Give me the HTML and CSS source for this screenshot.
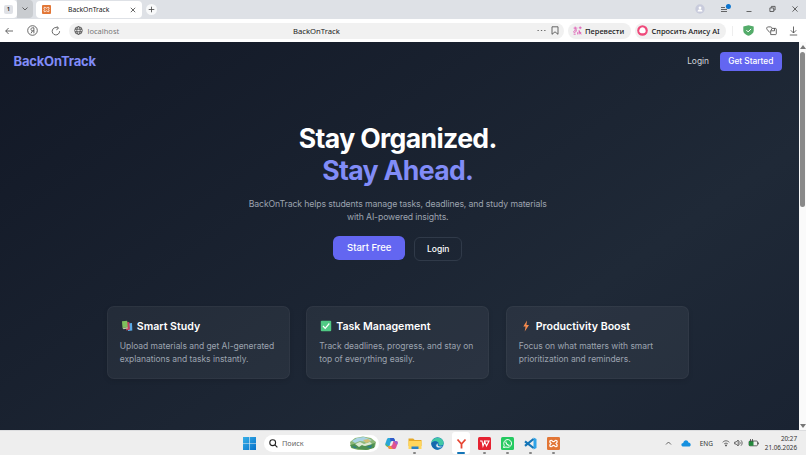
FILE: index.html
```html
<!DOCTYPE html>
<html lang="ru">
<head>
<meta charset="utf-8">
<title>BackOnTrack</title>
<link rel="stylesheet" href="styles.css">
</head>
<body>
<div class="tabbar">
  <div class="tab-count"><span>1</span></div>
  <div class="tab-list"><svg width="8" height="8" viewBox="0 0 8 8"><path d="M1.5 2.5 4 5l2.5-2.5" class="ln"/></svg></div>
  <div class="tab">
    <svg width="9" height="9" viewBox="0 0 20 20"><use href="#xampp"/></svg>
    <span>BackOnTrack</span>
    <svg class="tab-x" width="6" height="6" viewBox="0 0 6 6"><path d="M.8.8l4.4 4.4M5.2.8.8 5.2" class="ln"/></svg>
  </div>
  <div class="tab-new"><svg width="7" height="7" viewBox="0 0 7 7"><path d="M3.5.7v5.6M.7 3.5h5.6" class="ln"/></svg></div>
  <div class="window-tools">
    <svg width="10" height="10" viewBox="0 0 10 10"><circle cx="5" cy="5" r="4.7" fill="#c8cbdc"/><circle cx="5" cy="3.8" r="1.4" fill="#fff"/><path d="M2.6 7.6c0-3 4.8-3 4.8 0z" fill="#fff"/></svg>
    <svg width="12" height="10" viewBox="0 0 12 10"><path d="M1 3.5h4M1 5.5h6M1 7.5h6" class="ln"/><circle cx="8.4" cy="2.6" r="2.5" fill="#0c75d0"/></svg>
    <svg width="6" height="10" viewBox="0 0 6 10"><path d="M.5 7.5h5" class="ln"/></svg>
    <svg width="7" height="10" viewBox="0 0 7 10"><path d="M.9 3.9h3.8v3.6H.9zM2.4 3.7V2.4h3.7V6H5" class="ln"/></svg>
    <svg width="6" height="10" viewBox="0 0 6 10"><path d="M.5 2.4l5 5.2M5.5 2.4l-5 5.2" class="ln"/></svg>
  </div>
</div>
<div class="toolbar">
  <div class="nav-icons">
    <svg width="8" height="10" viewBox="0 0 8 10"><path d="M8 5H.7M3.6 2 .7 5l2.9 3" class="ln"/></svg>
    <svg width="11" height="11" viewBox="0 0 11 11"><circle cx="5.5" cy="5.5" r="4.8" class="ln"/><path d="M6.9 8.3V2.8H5.6c-2.2 0-2.2 3 0 3h1.3M5.5 5.8 4 8.3" class="ln"/></svg>
    <svg width="10" height="10" viewBox="0 0 10 10"><path d="M8.6 5.2A3.7 3.7 0 1 1 6.7 2M6 .3l1.5 2L5.4 3.8" class="ln"/></svg>
  </div>
  <div class="address">
    <svg width="9" height="9" viewBox="0 0 9 9"><circle cx="4.5" cy="4.5" r="3.8" class="ln"/><ellipse cx="4.5" cy="4.5" rx="1.7" ry="3.8" class="ln"/><path d="M1 3.2h7M1 5.8h7" class="ln"/></svg>
    <span class="host">localhost</span>
    <span class="page-name">BackOnTrack</span>
    <svg class="dots" width="9" height="9" viewBox="0 0 9 9"><path d="M.5 4.5h1.3M3.9 4.5h1.3M7.2 4.5h1.3" class="ln"/></svg>
    <svg width="8" height="9" viewBox="0 0 8 9"><path d="M1 .8h6v7.5L4 5.8 1 8.3z" class="ln"/></svg>
  </div>
  <div class="chip translate">
    <svg width="9" height="9" viewBox="0 0 9 9"><path d="M.6 2.1h3.8M2.2.6v4C.2 4.8.2 7 1.8 6.5 3.2 6 3.5 4.5 3.4 3.3M5.8 1.8h2.9M7.2.4v2.8M4.6 8.4V6.2M6.1 8.4V4.5l2 3.9M6 6.8h2.3M.6 8.2h2.1" fill="none" stroke="#dd50b0" stroke-width=".8"/></svg>
    <span>Перевести</span>
  </div>
  <div class="chip alice">
    <svg width="11" height="11" viewBox="0 0 11 11"><circle cx="5.5" cy="5.5" r="5.3" fill="#ef4a7b"/><path d="M5.5 2.2c2.200 0 3.700 3 3.100 4.500-.8 2-5.400 2-6.200 0C1.800 5.200 3.300 2.200 5.500 2.200z" fill="#fff"/></svg>
    <span>Спросить Алису AI</span>
  </div>
  <i class="divider"></i>
  <div class="ext-icons">
    <svg width="11" height="11" viewBox="0 0 11 11"><path d="M5.500.2 10.700 1.500v4C10.700 8.300 8 9.900 5.500 10.800 3 9.900.3 8.300.3 5.500v-4z" fill="#54ac6a"/><path d="M3.400 5.100l1.700 1.800 3-3" fill="none" stroke="#fff"/></svg>
    <svg width="11" height="10" viewBox="0 0 11 10"><path d="M3.800 6.600 1.100 3.400C.2 2.200.8.900 2.200.9h2.200c1 0 1.600.7 1.600 1.700L4.700 4.800v3.800h4.800c.5 0 .8-.3.800-.8V3.200c0-.5-.3-.8-.8-.8H6.200M8.500 2.400v2.400H4.900" class="ln"/></svg>
    <svg width="9" height="10" viewBox="0 0 9 10"><path d="M4.500.5v6.400M1.800 4.300l2.700 2.700 2.700-2.700M.8 9h7.400" class="ln"/></svg>
  </div>
</div>
<div class="viewport">
  <div class="site">
    <header>
      <div class="brand">BackOnTrack</div>
      <nav><a>Login</a><a class="get">Get Started</a></nav>
    </header>
    <main>
      <h1><span>Stay Organized.</span><span class="accent">Stay Ahead.</span></h1>
      <p class="lead"><span>BackOnTrack helps students manage tasks, deadlines, and study materials</span><span>with AI-powered insights.</span></p>
      <div class="actions"><a class="start">Start Free</a><a class="login">Login</a></div>
      <section class="cards">
        <article>
          <h2><svg width="12" height="12" viewBox="0 0 12 12"><path d="M6 3.500l5-.5.300 7.500-4.300.5z" fill="#5aa9e6"/><path d="M4 2.300l4.300-.3.700 7.500-3.700 1z" fill="#c33f5e"/><path d="M1 1.300 6.200.8l.5 6.500L1.500 8z" fill="#7fbf5c"/><path d="M1.500 8l5.200-.7.200 1.200-4.400.7z" fill="#b9c7a6"/></svg><span>Smart Study</span></h2>
          <p>Upload materials and get AI-generated<br>explanations and tasks instantly.</p>
        </article>
        <article>
          <h2><svg width="12" height="12" viewBox="0 0 12 12"><rect x=".8" y=".8" width="10.400" height="10.400" rx="1" fill="#50c984"/><path d="M3 6l2.200 2.400L9.300 3.500" fill="none" stroke="#fff" stroke-width="1.200"/></svg><span>Task Management</span></h2>
          <p>Track deadlines, progress, and stay on<br>top of everything easily.</p>
        </article>
        <article>
          <h2><svg width="12" height="12" viewBox="0 0 12 12"><path d="M7 .5 3.300 6.600h2.300l-.9 4.900 4.300-6.500H6.500z" fill="#f78b4d"/></svg><span>Productivity Boost</span></h2>
          <p>Focus on what matters with smart<br>prioritization and reminders.</p>
        </article>
      </section>
    </main>
  </div>
  <div class="scrollbar"><i class="up"></i><i class="thumb"></i><i class="down"></i></div>
</div>
<div class="taskbar">
  <svg class="win" width="13" height="13" viewBox="0 0 13 13"><path d="M0 0h6.200v6.200H0zM6.800 0H13v6.200H6.800zM0 6.800h6.200V13H0zM6.800 6.800H13V13H6.800z" fill="url(#wing)"/></svg>
  <div class="search">
    <svg width="9" height="9" viewBox="0 0 9 9"><circle cx="3.700" cy="3.700" r="2.900" fill="none" stroke="#222" stroke-width="1.100"/><path d="M5.900 5.900l2.500 2.500" stroke="#222" stroke-width="1.200"/></svg>
    <span>Поиск</span>
    <svg class="scene" width="28" height="14" viewBox="0 0 28 14"><path d="M1 6 6 2 14 .5 22 2l5 4-1 5-7 3H9L2 12z" fill="#8db878"/><path d="M3 5l5-3 7-1 8 3-4 2-8-1-5 2z" fill="#a9d3e6"/><path d="M1 9l8-2 6 3 11-3-1 5-8 2-7-1-7-1z" fill="#4f9151"/><path d="M6 8l5-2 4 2 6-2 2 2-7 2-3-1-3 2z" fill="#dce9d4"/><path d="M3 10l5 1-2 1.500zM17 11l6-2-1 3z" fill="#2c7d8e"/><path d="M14 4l5-1 3 2-5 2z" fill="#d1bf74"/></svg>
  </div>
  <div class="apps">
    <div class="app"><svg width="13" height="13" viewBox="0 0 13 13"><path d="M4 1h4c1 0 1.300.6 1.600 1.600L10 4H7.500C6 4 5.700 5 5.300 6.500L4.500 9H2C.5 9 0 7.800.4 6.600L1.800 2.500C2.200 1.400 3 1 4 1z" fill="#2aa6d8"/><path d="M9 12H5c-1 0-1.300-.6-1.600-1.600L3 9h2.500C7 9 7.300 8 7.700 6.500L8.500 4H11c1.500 0 2 1.200 1.600 2.400l-1.400 4.100C10.800 11.600 10 12 9 12z" fill="#df5390"/><path d="M5 1h3c1 0 1.300.6 1.600 1.600L10 4H7.500L5.500 4z" fill="#3159c9"/><path d="M.5 6.500 3 9l.4 1.500L1 9z" fill="#63b85b"/><path d="M3 9h2.500L8 12H5c-1 0-1.300-.6-1.600-1.600z" fill="#f29a38"/><path d="M8.500 4H11c1.500 0 2 1.200 1.600 2.400L12 8z" fill="#9b60d3"/></svg></div>
    <div class="app run"><svg width="14" height="13" viewBox="0 0 14 13"><path d="M.5 1.500h4.700l1.500 1.500h6.800v6H.5z" fill="#e5a826"/><path d="M.5 4h13v8H.5z" fill="#ffd65c"/><path d="M3.500 9.500h7V12h-7z" fill="#2781c6"/></svg></div>
    <div class="app"><svg width="13" height="13" viewBox="0 0 13 13"><circle cx="6.500" cy="6.500" r="6.200" fill="#1678bd"/><path d="M.4 6C1-.5 12-1.500 12.700 6c0 3-4.200 3-5 1.500C8.500 4 3 3 .4 6z" fill="#42c8a5"/><path d="M.4 6c3-3 7-1.500 7.300 1-1.500-1.800-4-.5-3.500 2 .4 2 2 3.300 4 3.500C4 13.500 0 10 .4 6z" fill="#1768ad"/><path d="M7.500 6.500c-2 1-.5 3.800 4.300 3-1.500 1-4.300 1.500-5.800.5-1.500-1.200-.5-3.500 1.500-3.500z" fill="#efefef"/></svg></div>
    <div class="app active"><svg width="11" height="13" viewBox="0 0 11 13"><path d="M1.500 2.500 5.500 7v4.500M9.500 2.500 5.500 7" fill="none" stroke="#e64532" stroke-width="1.800"/></svg></div>
    <div class="app run"><svg width="13" height="13" viewBox="0 0 13 13"><rect width="13" height="13" rx="1.500" fill="#e52332"/><path d="M2 4h2l1 5 1.700-4.500L8.500 9 11 4H6" fill="none" stroke="#fff" stroke-width="1.100"/></svg></div>
    <div class="app run"><svg width="13" height="13" viewBox="0 0 13 13"><rect width="13" height="13" rx="1.500" fill="#25ca61"/><path d="M2.500 10.500l.7-2.200A3.900 3.900 0 1 1 5 10z" fill="none" stroke="#fff"/><path d="M5 4.500c-.5 1.500 1.500 4 3.500 3.800" fill="none" stroke="#fff" stroke-width="1.200"/></svg></div>
    <div class="app run"><svg width="13" height="13" viewBox="0 0 13 13"><path d="M9.500.5 12.500 2v9l-3 1.500z" fill="#2fa4e8"/><path d="M1 4.300 9.500 11M1 8.800 9.500 2" stroke="#1475b7" stroke-width="2.200"/></svg></div>
    <div class="app run"><svg width="13" height="13" viewBox="0 0 20 20"><g id="xampp"><rect width="20" height="20" rx="2" fill="#e27636"/><path d="M6.500 5C3.500 5 4 8.500 6 10c-2 1.500-2.500 5 .5 5 1.500 0 1.500-2 3.500-2s2 2 3.500 2c3 0 2.500-3.500.5-5 2-1.500 2.500-5-.5-5C12 5 12 7 10 7S8 5 6.500 5z" fill="none" stroke="#fff" stroke-width="1.900"/></g></svg></div>
  </div>
  <div class="tray">
    <svg width="7" height="6" viewBox="0 0 7 6"><path d="M1 4.500 3.500 2 6 4.500" class="ln"/></svg>
    <svg class="cloud" width="10" height="7" viewBox="0 0 10 7"><path d="M2.500 6.500C-.3 6.500-.2 3 2.200 3 3-.5 6.800-.4 7.400 2.600 10.700 3 10 6.500 8 6.500z" fill="#1590df"/></svg>
    <span class="lang">ENG</span>
    <svg class="wifi" width="8" height="8" viewBox="0 0 8 8"><path d="M.7 3.300c2-2 4.600-2 6.600 0M2.200 4.900c1-1 2.600-1 3.600 0" class="ln"/><circle cx="4" cy="6.400" r=".9" fill="#444"/></svg>
    <svg class="vol" width="9" height="8" viewBox="0 0 9 8"><path d="M.7 3h1.500L4.200 1v6L2.200 5H.7zM5.500 2.500c.8.900.8 2.100 0 3M7 1.300c1.500 1.600 1.500 3.800 0 5.400" class="ln"/></svg>
    <svg class="bat" width="11" height="8" viewBox="0 0 11 8"><rect x="1" y="2" width="8.500" height="4.800" rx="1" class="ln"/><path d="M1 2h4.500v4.800H1z" fill="#23883b"/><path d="M10.500 3.500v1.800M2.500 0v3M4.500 0v3" class="ln"/></svg>
    <div class="clock"><span>20:27</span><span>21.06.2026</span></div>
  </div>
</div>
<svg width="0" height="0"><defs><linearGradient id="wing" x2="1" y2="1"><stop stop-color="#37b0e8"/><stop offset="1" stop-color="#0871c9"/></linearGradient></defs></svg>
</body>
</html>
```

FILE: styles.css
```css
* { box-sizing: border-box; }
body { margin: 0; width: 806px; height: 455px; overflow: hidden; display: flex; flex-direction: column; font-family: Inter, sans-serif; }
svg { display: block; flex: none; }
.ln { fill: none; stroke: #444; stroke-width: .8; }
span { white-space: nowrap; }

.tabbar { height: 19px; flex: none; display: flex; background: #dee1e6; font: 7px "Noto Sans", sans-serif; color: #222; }
.tab-count { width: 17px; height: 18px; background: #fff; border-radius: 0 4px 4px 0; display: flex; align-items: center; justify-content: center; }
.tab-count span { width: 9px; height: 9px; background: #dfe1e6; border-radius: 2px; text-align: center; line-height: 9px; font-weight: 600; font-size: 6px; }
.tab-list { width: 16px; height: 18px; background: #c9ccd0; border-radius: 0 4px 4px 0; display: flex; align-items: center; justify-content: center; }
.tab { margin: 1px 0 0 3px; width: 106px; height: 17px; background: #fff; border-radius: 4px; display: flex; align-items: center; padding: 0 6px; }
.tab span { margin-left: 17px; font-size: 6.800px; }
.tab-x { margin-left: auto; }
.tab-new { margin: 4px 0 0 4px; width: 11px; height: 11px; background: #f8f9fa; border-radius: 50%; display: flex; align-items: center; justify-content: center; }
.window-tools { margin: 4px 8px 0 auto; display: flex; gap: 16.500px; }
.window-tools svg:nth-child(2) { margin: 0 -2px 0 -2px; }

.toolbar { height: 23px; flex: none; display: flex; align-items: center; background: #fff; font: 7px "Noto Sans", sans-serif; color: #222; border-radius: 0 4px 0 0; }
.nav-icons { display: flex; align-items: center; width: 69px; padding-left: 5px; gap: 13.500px; }
.address { width: 495px; height: 16px; border-radius: 8px; background: #f1f1f1; display: flex; align-items: center; padding: 0 5px; }
.host { margin-left: 4.500px; color: #777; width: 205.500px; font-size: 7.5px; }
.page-name { font-size: 7.700px; }
.dots { margin: 0 5px 0 auto; }
.chip { height: 16px; border-radius: 8px; background: #f0f0f0; display: flex; align-items: center; gap: 3px; font-size: 7.5px; font-weight: 500; }
.translate { width: 63px; margin-left: 4px; padding-left: 5px; }
.alice { width: 91px; margin-left: 4px; padding-left: 2px; gap: 3.500px; }
.divider { width: 1px; height: 10px; background: #eee; margin-left: 6px; }
.ext-icons { display: flex; align-items: center; gap: 12px; margin-left: 10px; }

.viewport { height: 388px; flex: none; display: flex; }
.site { width: 799px; height: 388px; background: linear-gradient(145deg, #121826 0%, #1f2937 70%, #1a2332 100%); color: #fff; }
header { height: 38px; display: flex; align-items: center; justify-content: space-between; padding: 0 17px 0 13.500px; }
.brand { color: #818cf8; font-size: 13px; font-weight: 700; letter-spacing: -.18px; }
nav { display: flex; align-items: center; gap: 10.500px; font-size: 8.400px; color: #d1d5db; }
.get { width: 62.500px; height: 19px; line-height: 19px; background: #6366f1; border-radius: 4px; text-align: center; color: #fff; font-weight: 500; letter-spacing: -.05px; }
main { display: flex; flex-direction: column; align-items: center; padding: 42px 3.500px 0 0; }
h1 { margin: 0; font-size: 26.600px; line-height: 32px; font-weight: 700; text-align: center; letter-spacing: -.63px; }
h1 span, .lead span { display: block; }
.accent { color: #818cf8; }
.lead { margin: 12px 0 0; font-size: 8.700px; letter-spacing: -.12px; line-height: 13px; color: #9ca3af; text-align: center; }
.actions { margin-top: 12px; display: flex; gap: 9px; align-items: flex-start; font-weight: 500; text-align: center; }
.start { width: 72px; height: 24px; line-height: 24px; border-radius: 6px; background: #6366f1; font-size: 9.500px; }
.login { margin-top: 1px; width: 48px; height: 24px; line-height: 22px; border-radius: 6px; border: 1px solid #303a49; font-size: 8.500px; }
.cards { width: 582px; margin-top: 44.500px; display: grid; grid-template-columns: repeat(3, 183px); column-gap: 16.500px; }
article { height: 73px; border-radius: 7px; border: 1px solid rgba(255,255,255,.04); background: rgba(255,255,255,.05); padding: 12.600px 0 0 12px; box-shadow: 0 2px 5px rgba(0,0,0,.1); }
h2 { margin: 0; height: 14px; display: flex; align-items: center; gap: 4px; padding-left: 1px; font-size: 10.600px; font-weight: 600; }
article p { margin: 6.500px 0 0; font-size: 8.500px; letter-spacing: -.04px; line-height: 13px; color: #9ca3af; white-space: nowrap; }

.scrollbar { width: 7px; display: flex; flex-direction: column; align-items: center; background: #fafafa; padding: 3px 0 2px; }
.thumb { width: 5px; height: 155px; border-radius: 3px; background: #898989; margin-top: 3px; }
.up { border: 3px solid transparent; border-top: 0; border-bottom: 4px solid #777; }
.down { border: 3px solid transparent; border-bottom: 0; border-top: 4px solid #777; margin-top: auto; }

.taskbar { height: 25px; flex: none; background: #eee; border-top: 1px solid #dcdddf; display: flex; align-items: center; color: #333; font: 6.500px "Noto Sans", sans-serif; }
.win { margin-left: 243px; }
.search { margin-left: 8px; width: 115px; height: 17px; border-radius: 9px; background: #fff; display: flex; align-items: center; padding: 0 2px 0 5px; font-size: 7.300px; color: #666; }
.search span { margin-left: 4px; }
.scene { margin-left: auto; }
.apps { display: flex; margin-left: 3.500px; gap: 5.200px; }
.app { width: 18px; height: 22px; display: flex; align-items: center; justify-content: center; position: relative; border-radius: 3px; }
.active { background: #fff; }
.run::after, .active::after { content: ""; position: absolute; bottom: 0; width: 3px; height: 2px; border-radius: 1px; background: #858585; }
.active::after { width: 8px; background: #1475b7; }
.tray { flex: 1; display: flex; align-items: center; justify-content: flex-end; padding-right: 9px; }
.cloud { margin-left: 9px; }
.lang { margin-left: 9px; }
.wifi { margin-left: 9px; }
.vol { margin-left: 4px; }
.bat { margin-left: 5px; }
.clock { width: 38px; display: flex; flex-direction: column; align-items: flex-end; line-height: 9px; font-size: 6.300px; }
```
